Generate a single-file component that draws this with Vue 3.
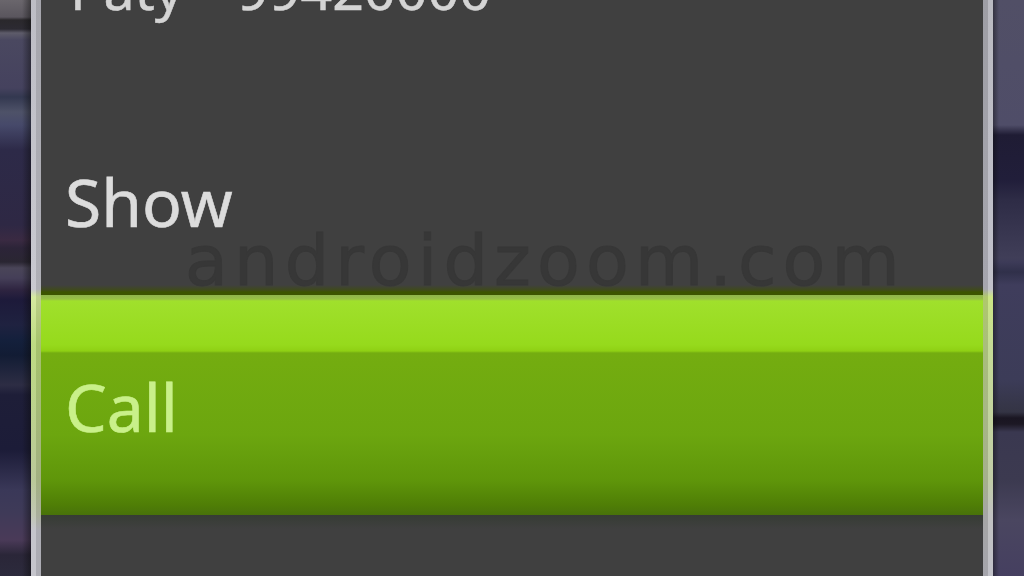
<script setup>
const contact = { name: 'Paty', number: '99420000' }
const actions = { show: 'Show', call: 'Call' }
const watermark = 'androidzoom.com'
</script>

<template>
  <div class="screen">
    <div class="side side-left"></div>
    <div class="dialog">
      <div class="edge edge-left"></div>
      <div class="panel">
        <div class="row row-contact">
          <span class="name">{{ contact.name }}</span>
          <span class="number">{{ contact.number }}</span>
        </div>
        <div class="row row-show">
          <span class="watermark">{{ watermark }}</span>
          <span class="label">{{ actions.show }}</span>
        </div>
        <div class="row row-call">
          <span class="label label-call">{{ actions.call }}</span>
        </div>
        <div class="tail"></div>
      </div>
      <div class="edge edge-right"></div>
    </div>
    <div class="side side-right"></div>
  </div>
</template>

<style scoped>
* {
  box-sizing: border-box;
}
.screen {
  display: flex;
  width: 1024px;
  height: 576px;
  overflow: hidden;
  background: #33303f;
  font-family: "Noto Sans", "Open Sans", sans-serif;
}
.side {
  flex: 0 0 31px;
  height: 576px;
}
.side-left {
  background:
    linear-gradient(90deg, rgba(0,0,0,0) 22px, rgba(10,10,10,.45) 31px),
    linear-gradient(180deg,
      #6a666c 0, #5a565e 17px, #2a282c 20px, #2c2a32 29px, #5e5c6a 33px, #4a4860 40px,
      #45425e 88px, #333850 97px, #4e5268 112px, #46496a 125px, #2d2a48 150px,
      #2e2844 225px, #3a2a42 240px, #2c2438 248px, #2a2632 262px, #4a4558 268px,
      #453f58 278px, #2e2440 290px, #1d1a3a 300px, #1f2240 325px, #14203c 340px,
      #121c34 355px, #2d2d44 385px, #1e1e38 395px, #1c1c38 450px, #3a3858 490px,
      #3e3a58 510px, #4a3a58 540px, #2a2638 555px, #2c2a3c 576px);
}
.side-right {
  background:
    linear-gradient(90deg, rgba(10,10,10,.4) 0, rgba(0,0,0,0) 6px),
    linear-gradient(180deg,
      #514f66 0, #4f4d68 125px, #1f1c34 135px, #211e3a 180px, #2e2c46 200px,
      #403e58 258px, #3d3b58 262px, #30304a 272px, #3f3d5c 285px, #3c3c58 380px,
      #343444 412px, #1a1622 418px, #1c1824 424px, #3a3850 432px, #3c3a50 480px,
      #4a4660 520px, #453f60 576px);
}
.dialog {
  flex: 1;
  display: flex;
  height: 576px;
}
.edge {
  flex: 0 0 10px;
  height: 576px;
}
.edge-left {
  background:
    linear-gradient(90deg, rgba(255,255,255,.08) 0 5px, rgba(0,0,0,.1) 5px 10px),
    linear-gradient(180deg,
      #b8b8c0 0, #c4c4cc 289px, #d2e898 297px, #b8d878 345px, #b4c490 480px,
      #bcc2ac 515px, #c0c0c8 530px, #c0c0c8 576px);
}
.edge-right {
  background:
    linear-gradient(90deg, rgba(0,0,0,.12) 0 5px, rgba(255,255,255,.08) 5px 10px),
    linear-gradient(180deg,
      #b4b4bc 0, #bcbcc6 289px, #c8e47a 297px, #c0d88c 345px, #bcc8a0 480px,
      #bcbcbc 515px, #bcbcc4 576px);
}
.panel {
  flex: 1;
  display: flex;
  flex-direction: column;
  justify-content: flex-end;
  min-width: 0;
  height: 576px;
  overflow: hidden;
  background: #404040;
}
.row {
  flex: none;
  position: relative;
  display: flex;
  align-items: flex-start;
  padding-left: 24px;
}
.row-contact {
  height: 204px;
  padding-left: 29px;
  gap: 54px;
  color: #d4d4d4;
  font-size: 55.5px;
  line-height: 76px;
  -webkit-text-stroke: .5px #d4d4d4;
}
.row-show {
  height: 140px;
  padding-top: 1px;
  background: linear-gradient(180deg, #404040 0, #404040 130px, #3f4a1c 135px, #3c5400 137px, #3c5400 140px);
}
.label {
  position: relative;
  color: #dcdcdc;
  font-size: 66px;
  line-height: 90px;
  -webkit-text-stroke: .6px #dcdcdc;
}
.watermark {
  position: absolute;
  left: 144px;
  top: 66px;
  color: #373737;
  font-family: "DejaVu Sans", sans-serif;
  font-size: 70px;
  line-height: 80px;
  letter-spacing: 6.2px;
  white-space: nowrap;
  -webkit-text-stroke: 1px #373737;
}
.row-call {
  height: 220px;
  padding-top: 66px;
  background: linear-gradient(180deg,
    #8fb44c 0, #98c045 4px, #a0e02c 6px, #96da1c 50px, #8fd014 56px,
    #74ad10 58px, #6ca60f 140px, #5f960a 185px, #4f7e06 210px, #48720a 220px);
}
.label-call {
  color: #c9f08a;
  -webkit-text-stroke: .6px #c9f08a;
}
.tail {
  flex: none;
  height: 61px;
  background: linear-gradient(180deg, #363c34 0, #404040 14px);
}
</style>
